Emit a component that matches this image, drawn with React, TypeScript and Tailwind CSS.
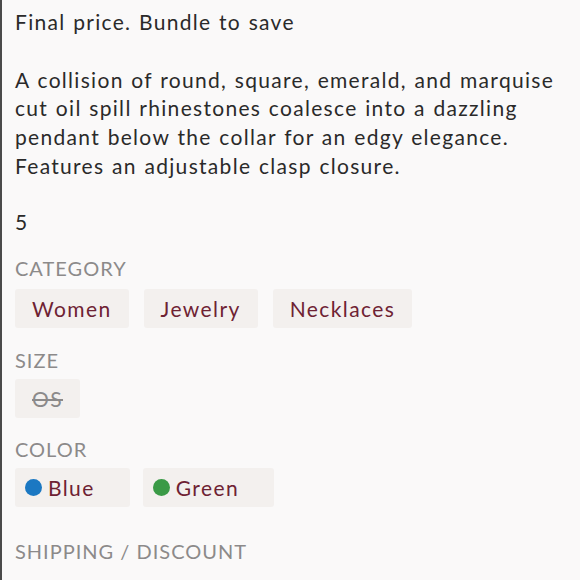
const categories = ["Women", "Jewelry", "Necklaces"];

const colors = [
  { name: "Blue", dot: "bg-[#1b78c2]" },
  { name: "Green", dot: "bg-[#3a9a46]" },
];

function Label({ children }: { children: React.ReactNode }) {
  return <div className="text-[20px] leading-[24px] tracking-[1px] text-[#8c8a8a]">{children}</div>;
}

function Chip({ children }: { children: React.ReactNode }) {
  return (
    <span className="flex h-[39px] items-center rounded-[3px] bg-[#f3f0ee] px-[17px] text-[21px] tracking-[1.4px] text-[#6e2233]">
      {children}
    </span>
  );
}

export default function App() {
  return (
    <div
      className="h-[580px] w-[580px] overflow-hidden border-l-2 border-[#4a4a4a] bg-[#faf9f9] pl-[13px] pt-[8px] text-[#2a2a2a]"
      style={{ fontFamily: "Lato, 'Open Sans', sans-serif" }}
    >
      <div className="text-[21px] leading-[28.7px] tracking-[1.3px] [word-spacing:1px]">
        <p>Final price. Bundle to save</p>
        <p className="mt-[29px] pr-[6px]">
          A collision of round, square, emerald, and marquise cut oil spill rhinestones coalesce into a dazzling
          pendant below the collar for an edgy elegance. Features an adjustable clasp closure.
        </p>
        <p className="mt-[27px]">5</p>
      </div>

      <div className="mt-[20px]">
        <Label>CATEGORY</Label>
        <div className="mt-[9px] flex gap-[15px]">
          {categories.map((c) => (
            <Chip key={c}>{c}</Chip>
          ))}
        </div>
      </div>

      <div className="mt-[20px]">
        <Label>SIZE</Label>
        <div className="mt-[7px] flex">
          <Chip>
            <span className="text-[#8c8a8a] line-through">OS</span>
          </Chip>
        </div>
      </div>

      <div className="mt-[19px]">
        <Label>COLOR</Label>
        <div className="mt-[7px] flex gap-[13px]">
          {colors.map((c) => (
            <span
              key={c.name}
              className="flex h-[39px] items-center gap-[6px] rounded-[3px] bg-[#f3f0ee] pl-[10px] pr-[35px] text-[21px] tracking-[1.4px] text-[#6e2233]"
            >
              <span className={`h-[17px] w-[17px] rounded-full ${c.dot}`} />
              {c.name}
            </span>
          ))}
        </div>
      </div>

      <div className="mt-[32px]">
        <Label>SHIPPING / DISCOUNT</Label>
      </div>
    </div>
  );
}
